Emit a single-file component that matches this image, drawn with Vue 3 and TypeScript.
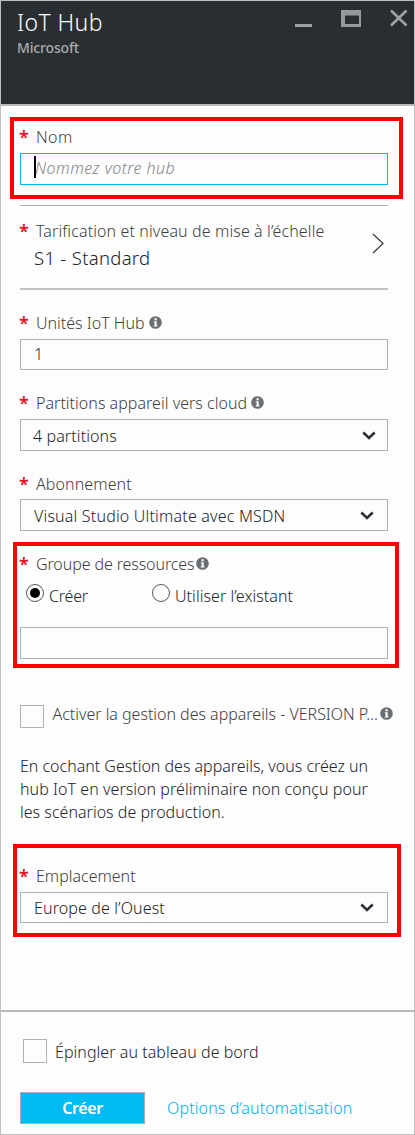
<script setup lang="ts">
import { ref } from 'vue'

const hubName = ref('')
const resourceGroup = ref('')
const groupMode = ref<'create' | 'existing'>('create')
</script>

<template>
  <main class="blade">
    <header class="head">
      <div class="titles">
        <h1><span>IoT Hub</span></h1>
        <p><span>Microsoft</span></p>
      </div>
      <svg class="controls" width="114" height="24" viewBox="0 0 114 24">
        <path d="M0 18.5H17" stroke="#a0a1a3" stroke-width="3" />
        <path fill="#98999b" fill-rule="evenodd" d="M46 3H66V20H46ZM50 8.5V17H64V8.5Z" />
        <path d="M96 3.5L111.5 18.5M111.5 3.5L96 18.5" stroke="#a0a1a3" stroke-width="2.6" />
      </svg>
    </header>

    <section class="name marked">
      <label class="label"><b>*</b><span class="t-nom">Nom</span></label>
      <div class="field focus"><i class="caret"></i><span class="t-ph">{{ hubName || 'Nommez votre hub' }}</span></div>
    </section>

    <section class="pricing">
      <div>
        <div class="label"><b>*</b><span class="t-tarif">Tarification et niveau de mise à l’échelle</span></div>
        <div class="tier"><span>S1 - Standard</span></div>
      </div>
      <svg class="next" width="12" height="21" viewBox="0 0 12 21"><path d="M1 1L11 10.5L1 20" fill="none" stroke="#34383f" stroke-width="1.2" /></svg>
    </section>

    <section class="units">
      <div class="label"><b>*</b><span class="t-units">Unités IoT Hub</span>
        <svg class="info" viewBox="0 0 13 13"><circle cx="6.5" cy="6.5" r="6.3" /><path d="M5.5 2.3H7.7V4.2H5.5ZM4.8 5.2H7.7V9.6H8.5V10.6H4.7V9.6H5.6V6.2H4.8Z" /></svg>
      </div>
      <div class="field short"><span>1</span></div>
    </section>

    <section class="parts">
      <div class="label"><b>*</b><span class="t-parts">Partitions appareil vers cloud</span>
        <svg class="info" viewBox="0 0 13 13"><circle cx="6.5" cy="6.5" r="6.3" /><path d="M5.5 2.3H7.7V4.2H5.5ZM4.8 5.2H7.7V9.6H8.5V10.6H4.7V9.6H5.6V6.2H4.8Z" /></svg>
      </div>
      <div class="field select wide"><span class="t-4">4 partitions</span><svg class="chev" viewBox="0 0 14 9"><path d="M1.3 1.5L7 6.9L12.7 1.5" /></svg></div>
    </section>

    <section class="sub">
      <div class="label"><b>*</b><span class="t-abo">Abonnement</span></div>
      <div class="field select"><span class="t-vs">Visual Studio Ultimate avec MSDN</span><svg class="chev" viewBox="0 0 14 9"><path d="M1.3 1.5L7 6.9L12.7 1.5" /></svg></div>
    </section>

    <section class="group marked">
      <div class="label"><b>*</b><span class="t-group">Groupe de ressources</span>
        <svg class="info" viewBox="0 0 13 13"><circle cx="6.5" cy="6.5" r="6.3" /><path d="M5.5 2.3H7.7V4.2H5.5ZM4.8 5.2H7.7V9.6H8.5V10.6H4.7V9.6H5.6V6.2H4.8Z" /></svg>
      </div>
      <div class="radios">
        <div class="radio first" @click="groupMode = 'create'"><i :class="{ on: groupMode === 'create' }"></i><span class="t-creer">Créer</span></div>
        <div class="radio" @click="groupMode = 'existing'"><i :class="{ on: groupMode === 'existing' }"></i><span class="t-use">Utiliser l’existant</span></div>
      </div>
      <div class="field"><span>{{ resourceGroup }}</span></div>
    </section>

    <section class="manage">
      <i class="box"></i><span class="t-act">Activer la gestion des appareils - VERSION P...</span>
      <svg class="info" viewBox="0 0 13 13"><circle cx="6.5" cy="6.5" r="6.3" /><path d="M5.5 2.3H7.7V4.2H5.5ZM4.8 5.2H7.7V9.6H8.5V10.6H4.7V9.6H5.6V6.2H4.8Z" /></svg>
    </section>

    <p class="note">
      <span class="n1">En cochant Gestion des appareils, vous créez un</span><br />
      <span class="n2">hub IoT en version préliminaire non conçu pour</span><br />
      <span class="n3">les scénarios de production.</span>
    </p>

    <section class="place marked">
      <div class="label"><b>*</b><span class="t-emp">Emplacement</span></div>
      <div class="field select short"><span class="t-eu">Europe de l’Ouest</span><svg class="chev" viewBox="0 0 14 9"><path d="M1.3 1.5L7 6.9L12.7 1.5" /></svg></div>
    </section>

    <footer class="foot">
      <div class="pin"><i class="box"></i><span class="t-pin">Épingler au tableau de bord</span></div>
      <div class="actions">
        <button class="create"><span>Créer</span></button>
        <a class="t-opt">Options d’automatisation</a>
      </div>
    </footer>
  </main>
</template>

<style>
html, body { margin: 0; }
</style>

<style scoped>
.blade, .blade *, .marked::before { box-sizing: border-box; }
.blade {
  width: 415px; height: 1135px; border: 1px solid #bfbfbf; background: #fdfdfd;
  font: 350 16px/20px "Noto Sans", "Open Sans", sans-serif; color: #20242c;
  display: flex; flex-direction: column; overflow: hidden; white-space: nowrap;
}
h1, p { margin: 0; font-weight: 350; }
i { font-style: normal; display: block; flex: none; }
svg { display: block; flex: none; }
section { padding: 0 26px 0 19px; flex: none; position: relative; }

.head { height: 105px; flex: none; background: #292e32; border-bottom: 2px solid #b9b9bb; display: flex; justify-content: space-between; padding: 5px 7px 0 16px; }
h1 { font-size: 23px; line-height: 32px; color: #fff; letter-spacing: .4px; }
.head p { font-size: 14px; line-height: 18px; color: #a9abad; font-weight: 500; margin-top: 1px; letter-spacing: -.15px; }
.controls { margin: 1px -2px 0 0; }

.label { display: flex; height: 20px; align-items: flex-start; color: #3d3d40; }
.label b { width: 16px; color: #e81123; font-weight: 600; font-size: 18px; line-height: 20px; margin-left: -1px; margin-right: 1px; }
.info { width: 13px; height: 13px; margin: 3px 0 0 4px; }
.info circle { fill: #6b6e73; }
.info path { fill: #fff; }

.t-nom { letter-spacing: .4px; }
.t-ph { letter-spacing: .45px; }
.t-tarif { letter-spacing: .12px; }
.tier span { letter-spacing: .3px; }
.t-parts { letter-spacing: .03px; }
.t-4, .t-abo { letter-spacing: .1px; }
.t-vs { letter-spacing: .19px; }
.t-group { letter-spacing: -.1px; }
.t-creer { letter-spacing: -.2px; }
.t-use { letter-spacing: .06px; }
.t-act { letter-spacing: -.02px; }
.n1 { letter-spacing: -.01px; }
.n2 { letter-spacing: .05px; }
.n3 { letter-spacing: .03px; }
.t-eu, .t-opt { letter-spacing: .13px; }
.t-pin { letter-spacing: .05px; }
.group .info { margin-left: 2px; }

.field { width: 368px; height: 32px; border: 1px solid #b0b1b3; display: flex; align-items: center; padding: 0 13px 0 13px; background: #fdfdfd; }
.field.short { height: 31px; }
.field.wide { padding: 0 11px 0 12px; }
.field.focus { border-color: #00b6ee; color: #84868a; font-style: italic; padding-left: 13px; }
.caret { width: 2px; height: 22px; background: #000; margin-top: -4px; }
.field.focus span { margin-top: -3px; margin-left: -1px; }
.field.short > span { margin-top: -1px; }
.select { justify-content: space-between; }
.select span { padding-top: 2px; }
.chev { width: 14px; height: 9px; }
.chev path { fill: none; stroke: #2b2f38; stroke-width: 2.6; }

.marked::before { content: ""; position: absolute; border: 4px solid #fe0000; pointer-events: none; }
.name { height: 99px; padding-top: 21px; }
.name .field { margin-top: 6px; }
.name.marked::before { left: 9px; top: 11px; width: 393px; height: 82px; }

.pricing { height: 85px; margin: 0 26px 0 19px; padding: 15px 4px 0 0; border-top: 1px solid #b0b1b3; border-bottom: 2px solid #c2c2c4; display: flex; justify-content: space-between; }
.tier { padding-left: 14px; font-size: 18.5px; line-height: 24px; margin-top: 5px; }
.next { margin-top: 12px; }

.units { height: 80px; padding-top: 23px; }
.units .field { margin-top: 6px; }
.parts { height: 81px; padding-top: 23px; }
.parts .field { margin-top: 6px; }
.sub { height: 80px; padding-top: 23px; }
.sub .field { margin-top: 5px; }

.group { height: 128px; padding-top: 23px; }
.group.marked::before { left: 12px; top: 11px; width: 386px; height: 126px; }
.radios { display: flex; height: 53px; padding: 10px 0 0 6px; }
.radio { display: flex; gap: 5px; }
.radio.first { width: 126px; }
.radio i { width: 18px; height: 18px; border: 1px solid #55575b; border-radius: 50%; display: grid; place-items: center; }
.radio i.on::after { content: ""; width: 10px; height: 10px; border-radius: 50%; background: #000; }
.radio span { padding-top: 2px; }

.manage { display: flex; padding-top: 46px; height: 96px; color: #3d3d40; padding-right: 0; }
.box { width: 24px; height: 24px; border: 1px solid #b0b1b3; margin-right: 8.5px; }
.manage .box { height: 23px; }
.manage .info { margin: 2px 0 0 2px; }
.manage span { margin-top: -1px; }

.note { line-height: 23px; padding-left: 19px; height: 89px; flex: none; }
.place { height: 166px; padding-top: 22px; }
.place .field { margin-top: 6px; }
.place.marked::before { left: 12px; top: 0; width: 388px; height: 93px; }

.foot { border-top: 2px solid #b9b9bb; flex: 1; padding: 27px 0 0 19px; }
.pin { display: flex; padding-left: 3px; }
.pin .box { margin-right: 8px; }
.pin span { padding-top: 3px; }
.actions { display: flex; align-items: center; gap: 22px; margin-top: 29px; }
.create { width: 125px; height: 32px; border: 1px solid #a9afb1; background: #00bcf5; color: #fff; font: 600 16px/20px "Noto Sans", sans-serif; letter-spacing: -.4px; padding: 0; }
.actions a { color: #00aeea; }
</style>
